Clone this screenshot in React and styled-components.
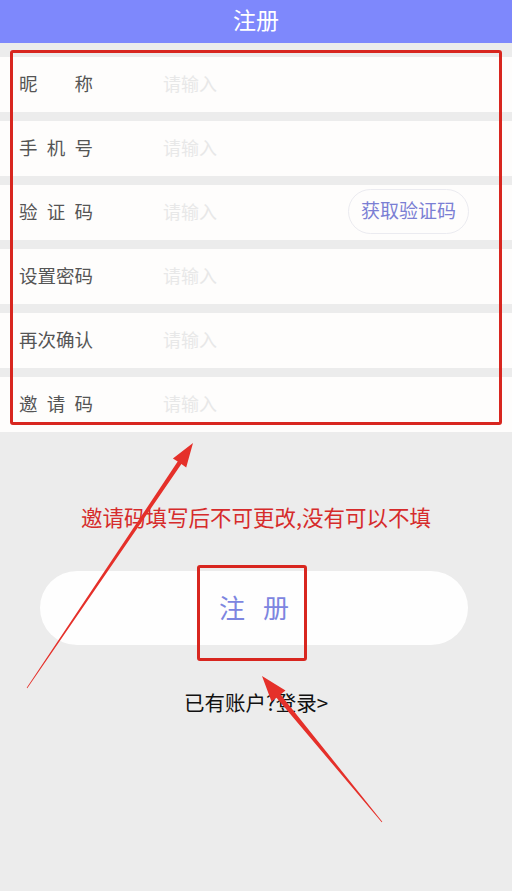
import React from 'react'
import styled, { createGlobalStyle } from 'styled-components'

const GlobalStyle = createGlobalStyle`
    html, body {
        margin: 0;
        padding: 0;
        background: #ececec;
    }
    body {
        font-family: "Noto Sans CJK SC", "Noto Sans", sans-serif;
    }
`

const Page = styled.div`
    position: relative;
    width: 512px;
    min-height: 891px;
    background: #ececec;
    overflow: hidden;
`
const Header = styled.header`
    height: 43px;
    box-sizing: border-box;
    padding-bottom: 5px;
    background: #7e88fc;
    color: #fff;
    font-size: 23px;
    display: flex;
    align-items: center;
    justify-content: center;
`
const Form = styled.div`
    position: relative;
    display: flex;
    flex-direction: column;
    gap: 9px;
    padding-top: 14px;
`
const Row = styled.div`
    height: 55px;
    box-sizing: border-box;
    padding: 0 43px 3px 19px;
    background: #fefdfc;
    display: flex;
    align-items: center;
`
const Label = styled.span`
    width: 74px;
    flex: none;
    font-size: 18.5px;
    color: #555;
    text-align: justify;
    text-align-last: justify;
`
const Input = styled.input`
    flex: 1;
    min-width: 0;
    margin-left: 70px;
    border: none;
    outline: none;
    background: transparent;
    font-family: inherit;
    font-size: 18px;
    color: #333;
    padding: 0;
    &::placeholder {
        color: #e8e8e8;
    }
`
const CodeButton = styled.button`
    flex: none;
    width: 121px;
    height: 45px;
    border-radius: 23px;
    border: 1px solid #ebebf0;
    background: #fefdfc;
    color: #7b7fd4;
    font-family: inherit;
    font-size: 19px;
    padding: 0 0 3px;
`
const Highlight = styled.div`
    position: absolute;
    border: 3px solid #d8261f;
    border-radius: 3px;
    pointer-events: none;
`
const Hint = styled.p`
    margin: 69px 0 0;
    text-align: center;
    font-size: 21.5px;
    color: #d62b2b;
`
const ButtonWrap = styled.div`
    position: relative;
    margin: 39px 44px 0 40px;
`
const Submit = styled.button`
    width: 100%;
    height: 74px;
    border: none;
    border-radius: 37px;
    background: #fefefe;
    color: #7d85e0;
    font-family: inherit;
    font-size: 26px;
    letter-spacing: 18px;
    text-indent: 18px;
    padding: 0 0 4px;
`
const LoginLink = styled.div`
    margin-top: 42px;
    text-align: center;
    font-size: 20.5px;
    color: #111;
`
const Overlay = styled.svg`
    position: absolute;
    left: 0;
    top: 0;
    pointer-events: none;
`

const fields = [
    { label: '昵称' },
    { label: '手机号' },
    { label: '验证码', code: true },
    { label: '设置密码' },
    { label: '再次确认' },
    { label: '邀请码' },
]

// tapered annotation arrow, tail -> tip
const arrowPoints = (tx, ty, hx, hy, headLen, headHalf, shaftHalf) => {
    const dx = hx - tx
    const dy = hy - ty
    const len = Math.hypot(dx, dy)
    const ux = dx / len
    const uy = dy / len
    const nx = -uy
    const ny = ux
    const bx = hx - ux * headLen
    const by = hy - uy * headLen
    const p = [
        [tx + nx * 0.4, ty + ny * 0.4],
        [bx + nx * shaftHalf, by + ny * shaftHalf],
        [bx + nx * headHalf, by + ny * headHalf],
        [hx, hy],
        [bx - nx * headHalf, by - ny * headHalf],
        [bx - nx * shaftHalf, by - ny * shaftHalf],
        [tx - nx * 0.4, ty - ny * 0.4],
    ]
    return p.map(([x, y]) => `${x.toFixed(1)},${y.toFixed(1)}`).join(' ')
}

export default function App() {
    return (
        <Page>
            <GlobalStyle />
            <Header>注册</Header>
            <Form>
                {fields.map(f => (
                    <Row key={f.label}>
                        <Label>{f.label}</Label>
                        <Input placeholder="请输入" />
                        {f.code && <CodeButton>获取验证码</CodeButton>}
                    </Row>
                ))}
                <Highlight style={{ left: 10, top: 7, right: 10, bottom: 7 }} />
            </Form>
            <Hint>邀请码填写后不可更改,没有可以不填</Hint>
            <ButtonWrap>
                <Submit>注册</Submit>
                <Highlight style={{ left: 157, top: -6, width: 104, height: 90 }} />
            </ButtonWrap>
            <LoginLink>已有账户?登录&gt;</LoginLink>
            <Overlay width="512" height="891" viewBox="0 0 512 891">
                <polygon fill="#e5302a" points={arrowPoints(27, 688, 193, 443, 24, 8, 2.2)} />
                <polygon fill="#e5302a" points={arrowPoints(382, 822, 262, 676, 26, 9, 2.6)} />
            </Overlay>
        </Page>
    )
}
